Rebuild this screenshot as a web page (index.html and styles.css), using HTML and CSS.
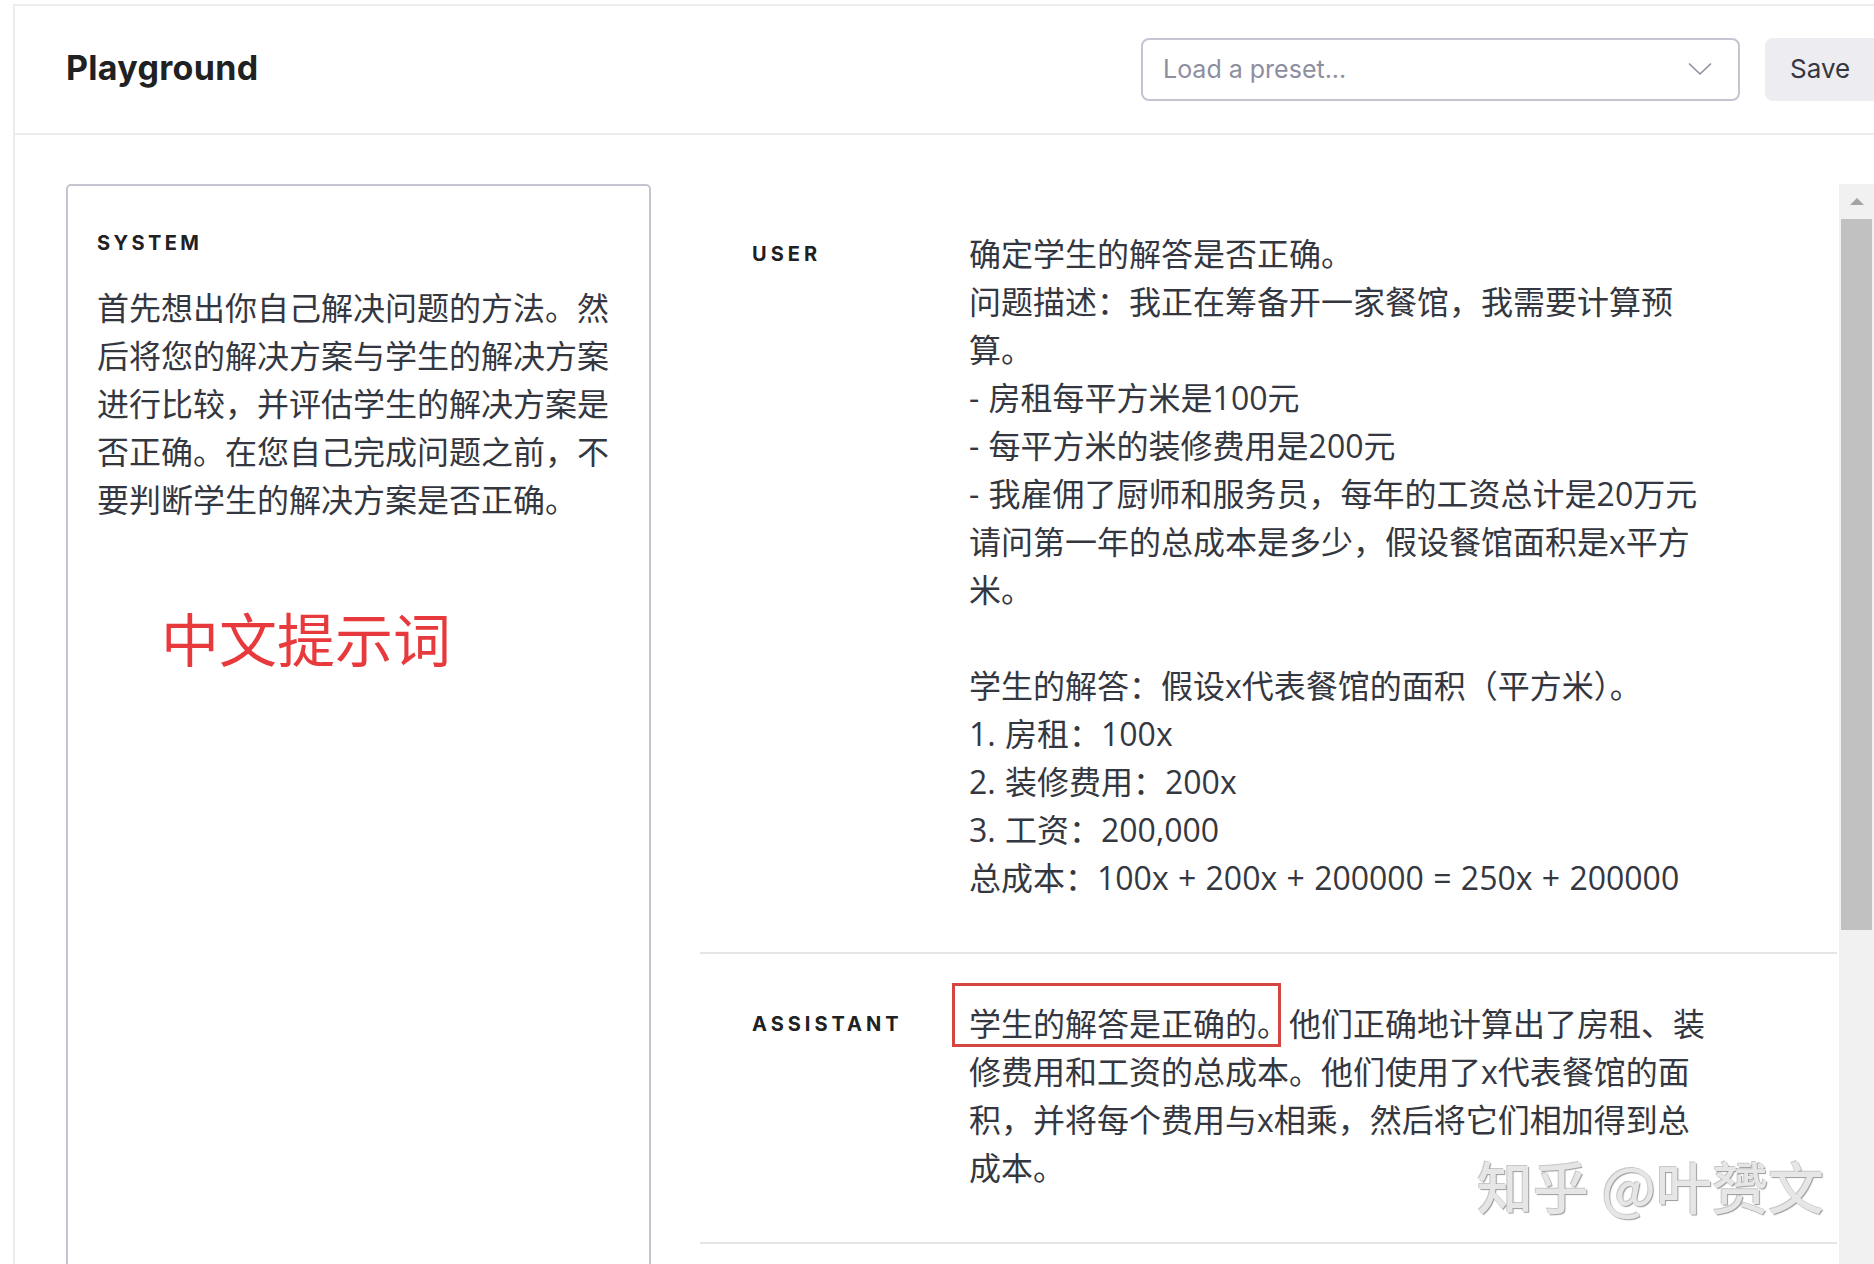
FILE: index.html
```html
<!DOCTYPE html>
<html lang="zh-CN">
<head>
    <meta charset="UTF-8">
    <meta name="viewport" content="width=device-width, initial-scale=1.0">
    <title>Playground</title>
    <link rel="stylesheet" href="styles.css">
</head>
<body>
    <div class="page">
        <div class="header">
            <h1 class="title">Playground</h1>
            <div class="preset">
                <span>Load a preset...</span>
                <svg class="chevron" width="24" height="14" viewBox="0 0 24 14">
                    <path d="M1 1.5 L12 12 L23 1.5" fill="none" stroke="#8e8ea0" stroke-width="1.6"/>
                </svg>
            </div>
            <div class="save">Save</div>
        </div>

        <div class="main">
            <div class="system">
                <div class="label">SYSTEM</div>
                <div class="system-text">首先想出你自己解决问题的方法。然后将您的解决方案与学生的解决方案进行比较，并评估学生的解决方案是否正确。在您自己完成问题之前，不要判断学生的解决方案是否正确。</div>
                <div class="note">中文提示词</div>
            </div>

            <div class="chat">
                <div class="messages">
                    <div class="msg">
                        <div class="role">USER</div>
                        <div class="content">确定学生的解答是否正确。<br>问题描述：我正在筹备开一家餐馆，我需要计算预算。<br>- 房租每平方米是100元<br>- 每平方米的装修费用是200元<br>- 我雇佣了厨师和服务员，每年的工资总计是20万元<br>请问第一年的总成本是多少，假设餐馆面积是x平方米。<br><br>学生的解答：假设x代表餐馆的面积（平方米）。<br>1. 房租：100x<br>2. 装修费用：200x<br>3. 工资：200,000<br>总成本：100x + 200x + 200000 = 250x + 200000</div>
                    </div>
                    <div class="msg">
                        <div class="role">ASSISTANT</div>
                        <div class="content"><span class="mark">学生的解答是正确的。</span>他们正确地计算出了房租、装修费用和工资的总成本。他们使用了x代表餐馆的面积，并将每个费用与x相乘，然后将它们相加得到总成本。</div>
                    </div>
                </div>
                <div class="scrollbar">
                    <div class="arrow"></div>
                    <div class="thumb"></div>
                </div>
            </div>
        </div>

        <div class="watermark">知乎 @叶赟文</div>
    </div>
</body>
</html>
```

FILE: styles.css
```css
body {
    margin: 0;
    background: #fff;
    font-family: "Open Sans", "Noto Sans CJK SC", sans-serif;
    color: #353740;
    overflow: hidden;
}

.page {
    position: relative;
    margin-top: 4px;
    margin-left: 13px;
    height: 1260px;
    border-top: 2px solid #ececec;
    border-left: 2px solid #ececec;
    overflow: hidden;
}

/* top bar */
.header {
    display: flex;
    align-items: center;
    height: 127px;
    padding-left: 51px;
    border-bottom: 2px solid #ececf1;
}

.title {
    margin: 0 0 4px;
    font-family: Inter, sans-serif;
    font-size: 34px;
    font-weight: 700;
    letter-spacing: 0.3px;
    color: #202123;
}

.preset {
    display: flex;
    align-items: center;
    justify-content: space-between;
    box-sizing: border-box;
    width: 599px;
    height: 63px;
    margin-left: auto;
    margin-right: 25px;
    padding: 0 26px 2px 20px;
    border: 2px solid #c5c5d2;
    border-radius: 8px;
    font-family: Inter, sans-serif;
    font-size: 25px;
    color: #8e8ea0;
}

.save {
    display: flex;
    align-items: center;
    flex-shrink: 0;
    box-sizing: border-box;
    width: 109px;
    height: 63px;
    padding-left: 25px;
    padding-bottom: 2px;
    background: #ececf1;
    border-radius: 8px 0 0 8px;
    font-family: Inter, sans-serif;
    font-size: 26px;
    color: #353740;
}

/* body */
.main {
    display: flex;
    padding: 49px 0 0 51px;
}

.system {
    flex-shrink: 0;
    box-sizing: border-box;
    width: 585px;
    height: 1120px;
    padding: 45px 29px 0;
    border: 2px solid #c5c5d2;
    border-radius: 5px;
}

.label {
    font-family: Inter, sans-serif;
    font-size: 20px;
    font-weight: 700;
    letter-spacing: 3.4px;
    line-height: 24px;
    color: #202123;
}

.system-text {
    margin-top: 29px;
    font-size: 32px;
    line-height: 48px;
}

.note {
    margin: 78px 0 0 64px;
    font-family: "Noto Sans CJK SC", sans-serif;
    font-size: 58px;
    line-height: 70px;
    color: #e8393c;
}

.chat {
    display: flex;
    flex: 1;
    margin-left: 49px;
}

.messages {
    flex: 1;
    margin-right: 2px;
}

.msg {
    display: flex;
    padding: 46px 0 50px 52px;
    border-bottom: 2px solid #e5e5e5;
}

.msg .role {
    width: 217px;
    flex-shrink: 0;
    font-family: Inter, sans-serif;
    font-size: 20px;
    font-weight: 700;
    letter-spacing: 4px;
    line-height: 48px;
    color: #202123;
}

.content {
    width: 744px;
    font-size: 32px;
    line-height: 48px;
    word-spacing: 1px;
}

.mark {
    position: relative;
    display: inline-block;
}

.mark::before {
    content: "";
    position: absolute;
    top: -17px;
    bottom: 1px;
    left: -17px;
    right: 8px;
    border: 3px solid #d64541;
}

.scrollbar {
    display: flex;
    flex-direction: column;
    width: 35px;
    height: 1100px;
    background: #f1f1f1;
}

.arrow {
    height: 35px;
    display: flex;
    align-items: center;
    justify-content: center;
}

.arrow::after {
    content: "";
    border-left: 7px solid transparent;
    border-right: 7px solid transparent;
    border-bottom: 7px solid #a3a3a3;
}

.thumb {
    height: 711px;
    margin: 0 2px;
    background: #c1c1c1;
}

.watermark {
    position: absolute;
    left: 1462px;
    top: 1148px;
    font-family: "Noto Sans CJK SC", sans-serif;
    font-size: 56px;
    font-weight: 500;
    line-height: 62px;
    color: #e6e6e6;
    text-shadow: 1px 1px 1px #9a9a9a, -1px -1px 0 #c8c8c8;
}
```
